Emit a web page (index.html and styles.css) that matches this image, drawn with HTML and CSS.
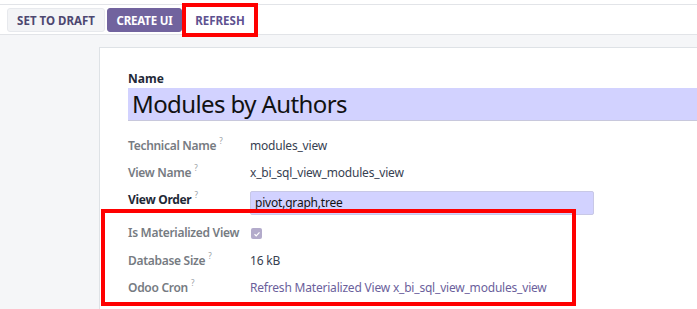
FILE: index.html
```html
<!DOCTYPE HTML>
<html>
<head>
<meta charset="utf-8">
<link rel="stylesheet" href="styles.css">
</head>
<body>
  <div class="control-panel">
    <button class="btn btn-secondary">Set to Draft</button>
    <button class="btn btn-primary">Create UI</button>
    <button class="btn btn-light">Refresh</button>
  </div>

  <div class="content">
    <div class="sheet">
      <div class="title-label">Name</div>
      <div class="title-input">Modules by Authors</div>

      <div class="fields">
        <div class="row row-first">
          <div class="label">Technical Name<sup>?</sup></div>
          <div class="value">modules_view</div>
        </div>
        <div class="row">
          <div class="label">View Name<sup>?</sup></div>
          <div class="value">x_bi_sql_view_modules_view</div>
        </div>
        <div class="row row-edit">
          <div class="label label-strong">View Order<sup>?</sup></div>
          <div class="value"><div class="field-input">pivot,graph,tree</div></div>
        </div>
        <div class="row row-gap">
          <div class="label">Is Materialized View</div>
          <div class="value"><span class="checkbox">
            <svg width="8" height="8" viewBox="0 0 8 8"><path d="M1.5 4.2 L3.2 5.8 L6.5 2.3" fill="none" stroke="#fff" stroke-width="1.2"/></svg>
          </span></div>
        </div>
        <div class="row">
          <div class="label">Database Size<sup>?</sup></div>
          <div class="value">16 kB</div>
        </div>
        <div class="row">
          <div class="label">Odoo Cron<sup>?</sup></div>
          <div class="value"><a class="link" href="#">Refresh Materialized View x_bi_sql_view_modules_view</a></div>
        </div>
      </div>
    </div>
  </div>

  <!-- annotation boxes -->
  <div class="mark mark-refresh"></div>
  <div class="mark mark-fields"></div>
</body>
</html>
```

FILE: styles.css
```css
html, body {
  height: 309px;
  overflow: hidden;
}

body {
  font-family: "Noto Sans", sans-serif;
  margin: 0;
  padding: 0;
  background-color: #f5f6f8;
  color: #374151;
}

.control-panel {
  margin-top: 4px;
  padding: 3px 0 0 7px;
  box-sizing: border-box;
  height: 31px;
  display: flex;
  gap: 2px;
  align-items: flex-start;
  background-color: #ffffff;
  border-top: 1px solid #e2e4e8;
  border-bottom: 1px solid #e2e4e8;
  box-shadow: 0 -4px 0 #ffffff;
}

.btn {
  font-family: "Noto Sans", sans-serif;
  font-size: 11.5px;
  font-weight: 700;
  text-transform: uppercase;
  white-space: nowrap;
  height: 24px;
  padding: 0 4px;
  border: 1px solid #e7e9ed;
  border-radius: 3px;
  cursor: pointer;
}

.btn-secondary {
  background-color: #f3f4f6;
  color: #4d4770;
  width: 98px;
}

.btn-primary {
  background-color: #71639e;
  border-color: #71639e;
  color: #ffffff;
  width: 75px;
  letter-spacing: -0.2px;
}

.btn-light {
  background-color: #ffffff;
  border-color: #ffffff;
  color: #5e5290;
  margin-left: 3px;
  width: 66px;
}

.content {
  padding: 12px 0 0 99px;
}

.sheet {
  background-color: #ffffff;
  border: 1px solid #dee2e6;
  border-right: none;
  border-bottom: none;
  height: 240px;
  padding: 22px 0 0 28px;
}

.title-label {
  font-size: 12px;
  font-weight: 700;
  color: #1f2937;
  margin-bottom: 1px;
}

.title-input {
  background-color: #d2d2ff;
  border-bottom: 1px solid #c8c8dc;
  height: 32px;
  line-height: 32px;
  font-size: 24px;
  letter-spacing: -0.6px;
  color: #111111;
  padding-left: 4px;
}

.fields {
  margin-top: 10px;
}

.row {
  display: grid;
  grid-template-columns: 122px 1fr;
  align-items: center;
  height: 27px;
  font-size: 12px;
  letter-spacing: -0.2px;
}

.row-first {
  height: 28px;
}

.row-edit {
  height: 30px;
}

.row-edit .label {
  padding-bottom: 3px;
}

.row-gap {
  margin-top: 2px;
  height: 29px;
}

.label {
  color: #767b82;
  font-weight: 600;
  letter-spacing: -0.3px;
}

.label-strong {
  color: #1f2937;
  font-weight: 700;
}

sup {
  font-size: 8px;
  color: #9aa0a6;
  margin-left: 3px;
  font-weight: 400;
  vertical-align: 6px;
  line-height: 0;
}

.value {
  color: #374151;
}

.field-input {
  width: 338px;
  height: 22px;
  line-height: 22px;
  background-color: #d2d2ff;
  border: 1px solid #c8c8e6;
  border-radius: 2px;
  padding-left: 4px;
  color: #111111;
  margin-top: 4px;
}

.checkbox {
  display: inline-flex;
  align-items: center;
  justify-content: center;
  width: 11px;
  height: 11px;
  border-radius: 2px;
  background-color: #b3abcb;
  vertical-align: middle;
  margin-left: 1px;
}

.link {
  color: #6b5f9c;
  text-decoration: none;
}

.mark {
  position: absolute;
  border: 4px solid #ff0000;
  box-sizing: border-box;
}

.mark-refresh {
  left: 182px;
  top: 3px;
  width: 76px;
  height: 34px;
}

.mark-fields {
  left: 101px;
  top: 209px;
  width: 475px;
  height: 97px;
}
```
